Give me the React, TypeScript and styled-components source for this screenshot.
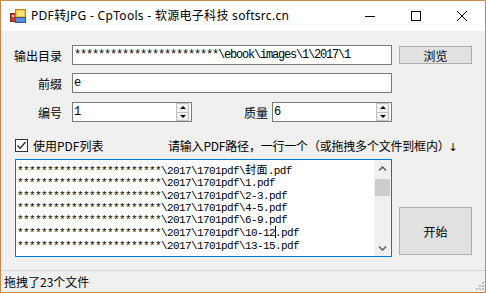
import React from "react"
import styled, { createGlobalStyle } from "styled-components"

const GlobalStyle = createGlobalStyle`
  html, body {
    margin: 0;
    padding: 0;
    background: #ffffff;
  }
  body {
    font-family: "Noto Sans CJK SC", "Noto Sans", sans-serif;
    font-size: 12px;
    color: #000;
  }
  * { box-sizing: border-box; }
`

const MONO = `"Liberation Mono", "Noto Sans CJK SC", monospace`

const Window = styled.div`
  width: 486px;
  height: 293px;
  border: 1px solid #c58a50;
  display: flex;
  flex-direction: column;
  background: #f0f0f0;
  overflow: hidden;
`

const TitleBar = styled.div`
  height: 30px;
  flex: none;
  background: #ffffff;
  display: flex;
  align-items: center;
  padding-left: 9px;
`

const TitleText = styled.span`
  margin-left: 5px;
  font-family: "Noto Sans", "Noto Sans CJK SC", sans-serif;
  font-size: 12px;
  letter-spacing: 0.3px;
  line-height: 30px;
  white-space: nowrap;
`

const Controls = styled.div`
  margin-left: auto;
  display: flex;
`

const CtrlButton = styled.div`
  width: 46px;
  height: 30px;
  display: flex;
  align-items: center;
  justify-content: center;
`

const Body = styled.div`
  flex: 1;
  display: flex;
  flex-direction: column;
`

const Row = styled.div<{ $top: number; $h: number }>`
  display: flex;
  align-items: center;
  margin-top: ${p => p.$top}px;
  height: ${p => p.$h}px;
`

const Label = styled.div<{ $w?: number; $ml?: number }>`
  width: ${p => p.$w ?? 61}px;
  margin-left: ${p => p.$ml ?? 0}px;
  margin-right: ${p => (p.$w ? 4 : 10)}px;
  text-align: right;
  white-space: nowrap;
`

const TextBox = styled.div`
  width: 320px;
  height: 20px;
  background: #fff;
  border: 1px solid #7a7a7a;
  padding-left: 1px;
  font-family: ${MONO};
  font-size: 12px;
  letter-spacing: -1.2px;
  line-height: 18px;
  white-space: nowrap;
  overflow: hidden;
`

const WinButton = styled.div<{ $h: number }>`
  width: 73px;
  height: ${p => p.$h}px;
  margin-left: 7px;
  background: #e1e1e1;
  border: 1px solid #adadad;
  display: flex;
  align-items: center;
  justify-content: center;
  font-size: 12px;
`

const Spinner = styled.div`
  width: 120px;
  height: 20px;
  background: #fff;
  border: 1px solid #7a7a7a;
  display: flex;
`

const SpinValue = styled.div`
  flex: 1;
  padding-left: 1px;
  font-family: ${MONO};
  font-size: 12px;
  line-height: 18px;
`

const SpinButtons = styled.div`
  width: 13px;
  margin: 0 2px 0 0;
  display: flex;
  flex-direction: column;
  border: 1px solid #c4c4c4;
  background: #f0f0f0;
`

const SpinHalf = styled.div<{ $down?: boolean }>`
  flex: 1;
  display: flex;
  align-items: center;
  justify-content: center;
  border-top: ${p => (p.$down ? "1px solid #c4c4c4" : "none")};

  &::after {
    content: "";
    width: 0;
    height: 0;
    border-left: 3px solid transparent;
    border-right: 3px solid transparent;
    ${p => (p.$down ? "border-top: 3px solid #000;" : "border-bottom: 3px solid #000;")}
  }
`

const CheckGroup = styled.div`
  width: 167px;
  display: flex;
  align-items: center;
  padding-left: 14px;
  gap: 5px;
`

const Box = styled.div`
  width: 13px;
  height: 13px;
  border: 1px solid #333;
  background: #fff;
  display: flex;
  align-items: center;
  justify-content: center;
`

const Hint = styled.div`
  white-space: nowrap;
  letter-spacing: -0.2px;
`

const Arrow = styled.span`
  font-family: "DejaVu Sans", sans-serif;
  font-size: 11px;
  margin-left: -1px;
`

const ListRow = styled.div`
  display: flex;
  align-items: flex-end;
  margin-top: 7px;
  padding-left: 14px;
`

const ListBox = styled.div`
  width: 377px;
  height: 98px;
  background: #fff;
  border: 1px solid #0078d7;
  display: flex;
`

const Lines = styled.div`
  flex: 1;
  padding: 3px 0 0 1px;
  font-family: ${MONO};
  font-size: 11px;
  letter-spacing: -0.6px;
  line-height: 12.3px;
  white-space: nowrap;
  overflow: hidden;
`

const Cjk = styled.span`
  font-family: "Noto Sans CJK SC", sans-serif;
  font-size: 11px;
  letter-spacing: 0.4px;
`

const Caret = styled.span`
  display: inline-block;
  width: 1px;
  height: 12px;
  margin-right: -1px;
  background: #000;
  vertical-align: -2px;
`

const ScrollBar = styled.div`
  width: 17px;
  background: #f0f0f0;
  display: flex;
  flex-direction: column;
`

const ScrollArrow = styled.div<{ $end?: boolean }>`
  height: 17px;
  margin-top: ${p => (p.$end ? "auto" : "0")};
  display: flex;
  align-items: center;
  justify-content: center;
`

const Thumb = styled.div`
  height: 17px;
  margin: 2px 1px 0;
  background: #cdcdcd;
`

const StatusBar = styled.div`
  margin-top: auto;
  height: 22px;
  border-top: 1px solid #d7d7d7;
  display: flex;
  align-items: center;
  padding-left: 3px;
`

const Grip = styled.div`
  margin-left: auto;
  margin-right: 1px;
  margin-top: 8px;
  display: flex;
`

const files = ["1.pdf", "2-3.pdf", "4-5.pdf", "6-9.pdf", "10-12", "13-15.pdf"]
const stars = "************************"

const Chevron = ({ down }: { down?: boolean }) => (
  <svg width="9" height="6" viewBox="0 0 9 6">
    <path
      d={down ? "M1 1.5 L4.5 5 L8 1.5" : "M1 4.5 L4.5 1 L8 4.5"}
      fill="none"
      stroke="#606060"
      strokeWidth="1.6"
    />
  </svg>
)

const App: React.FC = () => (
  <>
    <GlobalStyle />
    <Window>
      <TitleBar>
        <svg width="16" height="14" viewBox="0 0 16 14">
          <rect x="0.5" y="4.5" width="5" height="8" fill="#c83a2a" stroke="#7a2a20" />
          <rect x="2" y="6" width="2" height="2" fill="#f6e0c0" />
          <rect x="5.5" y="0.5" width="10" height="8" fill="#f7c531" stroke="#b8871e" />
          <rect x="7" y="2" width="7" height="5" fill="#fde27a" />
          <rect x="5.5" y="8.5" width="10" height="5" fill="#5c8fd8" stroke="#2c5aa0" />
        </svg>
        <TitleText>PDF转JPG - CpTools - 软源电子科技 softsrc.cn</TitleText>
        <Controls>
          <CtrlButton>
            <svg width="10" height="10" viewBox="0 0 10 10">
              <path d="M0 5.5 H10" stroke="#000" strokeWidth="1" />
            </svg>
          </CtrlButton>
          <CtrlButton>
            <svg width="10" height="10" viewBox="0 0 10 10">
              <rect x="0.5" y="0.5" width="9" height="9" fill="none" stroke="#000" />
            </svg>
          </CtrlButton>
          <CtrlButton>
            <svg width="10" height="10" viewBox="0 0 10 10">
              <path d="M0 0 L10 10 M10 0 L0 10" stroke="#000" strokeWidth="1" />
            </svg>
          </CtrlButton>
        </Controls>
      </TitleBar>

      <Body>
        <Row $top={14} $h={20}>
          <Label>输出目录</Label>
          <TextBox>{stars}\ebook\images\1\2017\1</TextBox>
          <WinButton $h={18}>浏览</WinButton>
        </Row>
        <Row $top={8} $h={20}>
          <Label>前缀</Label>
          <TextBox>e</TextBox>
        </Row>
        <Row $top={9} $h={20}>
          <Label>编号</Label>
          <Spinner>
            <SpinValue>1</SpinValue>
            <SpinButtons>
              <SpinHalf />
              <SpinHalf $down />
            </SpinButtons>
          </Spinner>
          <Label $w={24} $ml={52}>质量</Label>
          <Spinner>
            <SpinValue>6</SpinValue>
            <SpinButtons>
              <SpinHalf />
              <SpinHalf $down />
            </SpinButtons>
          </Spinner>
        </Row>

        <Row $top={17} $h={13}>
          <CheckGroup>
            <Box>
              <svg width="11" height="11" viewBox="0 0 11 11">
                <path d="M1.5 5.5 L4.2 8.3 L9.5 2" fill="none" stroke="#222" strokeWidth="1.3" />
              </svg>
            </Box>
            <span>使用PDF列表</span>
          </CheckGroup>
          <Hint>
            请输入PDF路径，一行一个（或拖拽多个文件到框内）<Arrow>↓</Arrow>
          </Hint>
        </Row>

        <ListRow>
          <ListBox>
            <Lines>
              <div>
                {stars}\2017\1701pdf\<Cjk>封面</Cjk>.pdf
              </div>
              {files.map(f => (
                <div key={f}>
                  {stars}\2017\1701pdf\{f}
                  {f === "10-12" && (
                    <>
                      <Caret />.pdf
                    </>
                  )}
                </div>
              ))}
            </Lines>
            <ScrollBar>
              <ScrollArrow>
                <Chevron />
              </ScrollArrow>
              <Thumb />
              <ScrollArrow $end>
                <Chevron down />
              </ScrollArrow>
            </ScrollBar>
          </ListBox>
          <WinButton $h={48} style={{ marginBottom: 2 }}>
            开始
          </WinButton>
        </ListRow>

        <StatusBar>
          <span>拖拽了23个文件</span>
          <Grip>
            <svg width="9" height="9" viewBox="0 0 9 9">
              {[
                [7, 1],
                [4, 4],
                [7, 4],
                [1, 7],
                [4, 7],
                [7, 7],
              ].map(([x, y]) => (
                <rect key={`${x}-${y}`} x={x} y={y} width="2" height="2" fill="#bcbcbc" />
              ))}
            </svg>
          </Grip>
        </StatusBar>
      </Body>
    </Window>
  </>
)

export default App
